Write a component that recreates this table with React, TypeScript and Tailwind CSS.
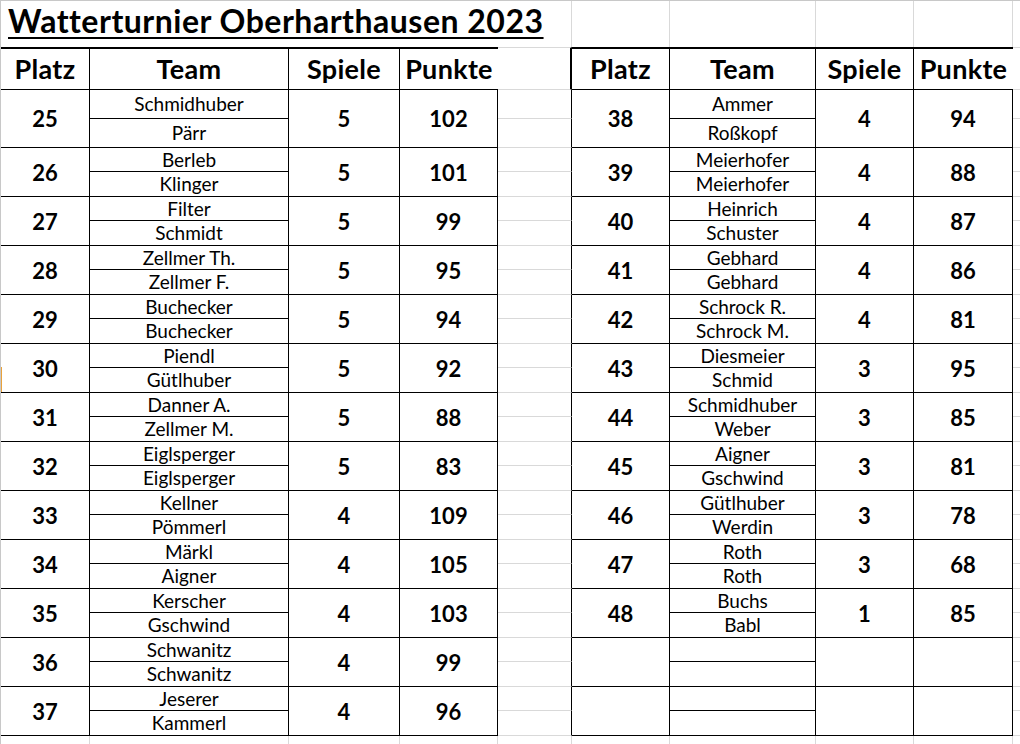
import clsx from "clsx";

type Entry = { platz: number; a: string; b: string; spiele: number; punkte: number } | null;

const links: Entry[] = [
  { platz: 25, a: "Schmidhuber", b: "Pärr", spiele: 5, punkte: 102 },
  { platz: 26, a: "Berleb", b: "Klinger", spiele: 5, punkte: 101 },
  { platz: 27, a: "Filter", b: "Schmidt", spiele: 5, punkte: 99 },
  { platz: 28, a: "Zellmer Th.", b: "Zellmer F.", spiele: 5, punkte: 95 },
  { platz: 29, a: "Buchecker", b: "Buchecker", spiele: 5, punkte: 94 },
  { platz: 30, a: "Piendl", b: "Gütlhuber", spiele: 5, punkte: 92 },
  { platz: 31, a: "Danner A.", b: "Zellmer M.", spiele: 5, punkte: 88 },
  { platz: 32, a: "Eiglsperger", b: "Eiglsperger", spiele: 5, punkte: 83 },
  { platz: 33, a: "Kellner", b: "Pömmerl", spiele: 4, punkte: 109 },
  { platz: 34, a: "Märkl", b: "Aigner", spiele: 4, punkte: 105 },
  { platz: 35, a: "Kerscher", b: "Gschwind", spiele: 4, punkte: 103 },
  { platz: 36, a: "Schwanitz", b: "Schwanitz", spiele: 4, punkte: 99 },
  { platz: 37, a: "Jeserer", b: "Kammerl", spiele: 4, punkte: 96 },
];

const rechts: Entry[] = [
  { platz: 38, a: "Ammer", b: "Roßkopf", spiele: 4, punkte: 94 },
  { platz: 39, a: "Meierhofer", b: "Meierhofer", spiele: 4, punkte: 88 },
  { platz: 40, a: "Heinrich", b: "Schuster", spiele: 4, punkte: 87 },
  { platz: 41, a: "Gebhard", b: "Gebhard", spiele: 4, punkte: 86 },
  { platz: 42, a: "Schrock R.", b: "Schrock M.", spiele: 4, punkte: 81 },
  { platz: 43, a: "Diesmeier", b: "Schmid", spiele: 3, punkte: 95 },
  { platz: 44, a: "Schmidhuber", b: "Weber", spiele: 3, punkte: 85 },
  { platz: 45, a: "Aigner", b: "Gschwind", spiele: 3, punkte: 81 },
  { platz: 46, a: "Gütlhuber", b: "Werdin", spiele: 3, punkte: 78 },
  { platz: 47, a: "Roth", b: "Roth", spiele: 3, punkte: 68 },
  { platz: 48, a: "Buchs", b: "Babl", spiele: 1, punkte: 85 },
  null,
  null,
];

const base = "flex items-center justify-center whitespace-nowrap overflow-visible";
const box = "row-span-2 border-r border-b border-black";
const line = "border-r border-b border-black";
const gap = "border-r border-b border-r-black border-b-[#d9d9d9]";
const grid = "border-r border-b border-[#d9d9d9]";
const top = "border-r border-[#d9d9d9]";
const num = "text-[22px] font-bold";
const name = "text-[19px] pt-px";

function Cell({ className, children }: { className?: string; children?: React.ReactNode }) {
  return <div className={clsx(base, className)}>{children}</div>;
}

function HeadCells() {
  const h = "text-[27px] tracking-[0.3px] font-bold border-t-2 border-b border-black";
  return (
    <>
      <Cell className={clsx(h, "border-r")}>Platz</Cell>
      <Cell className={clsx(h, "border-r")}>Team</Cell>
      <Cell className={clsx(h, "border-r")}>Spiele</Cell>
      <Cell className={h}>Punkte</Cell>
    </>
  );
}

export default function App() {
  const rows = links.map((l, i) => ({ l, r: rechts[i] }));
  return (
    <div className="relative h-[744px] w-[1020px] overflow-hidden border-l border-t border-[#c8c8c8] bg-white font-['Lato',sans-serif] text-black">
      <div className="grid grid-cols-[89px_199px_111px_98px_74px_98px_146px_98px_99px_100px] grid-rows-[46px_43px_29px_29px_repeat(12,24px_25px)_25px]">
        {/* Titelzeile */}
        <div className="col-span-5 flex items-start border-r border-[#d9d9d9] pl-[7px] pt-[4px]">
          <span className="whitespace-nowrap text-[32px] tracking-[0.5px] leading-none font-bold underline decoration-2 underline-offset-[4px]">
            Watterturnier Oberharthausen 2023
          </span>
        </div>
        <Cell className={top} />
        <Cell className={top} />
        <Cell className={top} />
        <Cell className={top} />
        <Cell className={top} />

        {/* Kopfzeile */}
        <HeadCells />
        <Cell className="border-t border-b border-r-2 border-t-[#d9d9d9] border-b-[#d9d9d9] border-r-black" />
        <HeadCells />
        <Cell className="border-t border-r border-b border-[#d9d9d9]" />

        {rows.map(({ l, r }, i) => (
          <div key={i} className="contents">
            <Cell className={clsx(box, num)}>{l?.platz}</Cell>
            <Cell className={clsx(line, name)}>{l?.a}</Cell>
            <Cell className={clsx(box, num)}>{l?.spiele}</Cell>
            <Cell className={clsx(box, num)}>{l?.punkte}</Cell>
            <Cell className={gap} />
            <Cell className={clsx(box, num)}>{r?.platz}</Cell>
            <Cell className={clsx(line, name)}>{r?.a}</Cell>
            <Cell className={clsx(box, num)}>{r?.spiele}</Cell>
            <Cell className={clsx(box, num)}>{r?.punkte}</Cell>
            <Cell className={grid} />
            <Cell className={clsx(line, name)}>{l?.b}</Cell>
            <Cell className={gap} />
            <Cell className={clsx(line, name)}>{r?.b}</Cell>
            <Cell className={grid} />
          </div>
        ))}

        {Array.from({ length: 10 }, (_, i) => (
          <Cell key={i} className={grid} />
        ))}
      </div>
      <div className="absolute left-[-1px] top-[366px] h-[25px] w-[2px] bg-[#e9a23b]" />
    </div>
  );
}
